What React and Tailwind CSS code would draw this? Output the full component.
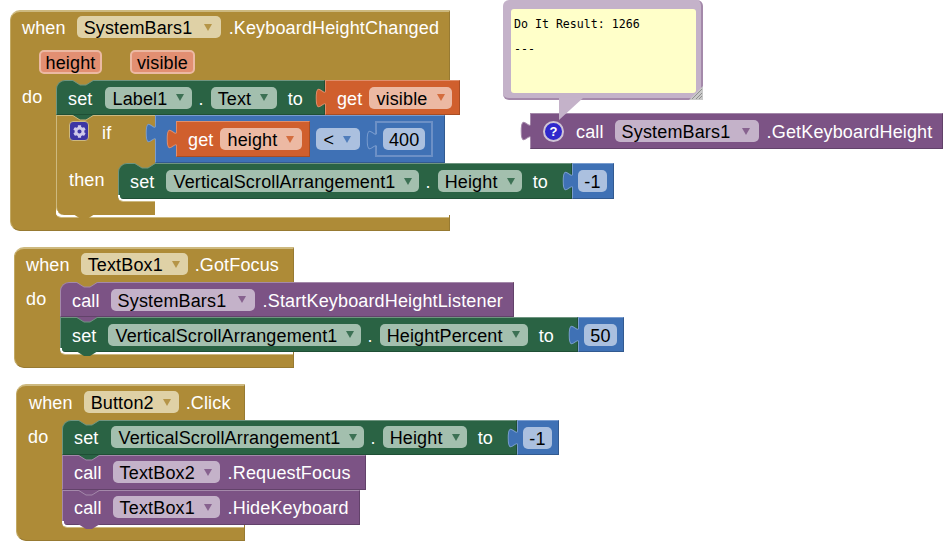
import React from 'react';
import { FaCog } from 'react-icons/fa';

// App Inventor block colours
const brown = { hex: '#ae8b37', light: '#cdb97f', dark: '#8f7130', bg: 'bg-[#ae8b37]', edges: 'border-t-[#cdb97f] border-l-[#cdb97f] border-b-[#977a32] border-r-[#977a32]', field: 'bg-[#dfd1a6]', arrow: '#ae8b37' };
const green = { hex: '#2a6344', light: '#6f9580', dark: '#1f4f35', bg: 'bg-[#2a6344]', edges: 'border-t-[#6f9580] border-l-[#6f9580] border-b-[#1f4f35] border-r-[#1f4f35]', field: 'bg-[#a3bfae]', arrow: '#2a6344' };
const purple = { hex: '#7c5385', light: '#a489aa', dark: '#62426a', bg: 'bg-[#7c5385]', edges: 'border-t-[#a489aa] border-l-[#a489aa] border-b-[#62426a] border-r-[#62426a]', field: 'bg-[#c4b2c9]', arrow: '#7c5385' };
const orange = { hex: '#d05f2d', light: '#e08f6c', dark: '#a84d24', bg: 'bg-[#d05f2d]', edges: 'border-t-[#e08f6c] border-l-[#e08f6c] border-b-[#a84d24] border-r-[#a84d24]', field: 'bg-[#ecb9a3]', arrow: '#d05f2d' };
const blue = { hex: '#3f71b5', light: '#7a9dcf', dark: '#325a90', bg: 'bg-[#3f71b5]', edges: 'border-t-[#7a9dcf] border-l-[#7a9dcf] border-b-[#325a90] border-r-[#325a90]', field: 'bg-[#abc0df]', arrow: '#3f71b5' };

const Word = ({ children, className = '' }) => (
  <span className={`text-white whitespace-nowrap pt-[2px] ${className}`}>{children}</span>
);

const Field = ({ tone, children, arrow = true, width }) => (
  <span className={`${tone.field} ${width} h-[22px] rounded-[5px] pt-[2px] flex items-center text-black whitespace-nowrap shrink-0 ${arrow ? 'pl-[7px] pr-[9px] justify-between' : 'justify-center'}`}>
    {children}
    {arrow && (
      <svg width="8" height="7" viewBox="0 0 8 7" className="ml-[9px] shrink-0 -mt-[2px]">
        <polygon points="0,0 8,0 4,7" fill={tone.arrow} opacity="0.85" />
      </svg>
    )}
  </span>
);

// notch between stacked statement blocks
const Tab = ({ fill, edge, className }) => (
  <svg width="23" height="7" viewBox="0 0 23 7" className={`absolute z-10 left-[16px] ${className}`}>
    <polygon points="0,0 8,5 14,5 22,0" fill={fill} />
    {edge && <polyline points="0,0 8,5 14,5 22,0" fill="none" stroke={edge} strokeWidth="1" />}
  </svg>
);

// output plug on the left of a value block (blockly puzzle tab)
const Plug = ({ fill, edge }) => (
  <svg width="11" height="20" viewBox="-0.5 0 9 15" preserveAspectRatio="none" className="absolute z-10 -left-[11px] top-[7px]">
    <path d="M8.5 0 c0 10 -8 -8 -8 7.5 s8 -2.5 8 7.5 Z" fill={fill} />
    <path d="M8.5 0 c0 10 -8 -8 -8 7.5 s8 -2.5 8 7.5" fill="none" stroke={edge} strokeWidth="0.8" />
  </svg>
);

// statement block: top notch comes from the block above, optional value on the right
const Statement = ({ tone, above, tail, value, className = '', inner = '', children }) => (
  <div className={`relative flex items-stretch h-[35px] ${above === brown ? brown.bg : ''} ${className}`}>
    {above && <Tab fill={above.hex} edge={tone.light} className="top-0" />}
    <div className={`${tone.bg} ${tone.edges} border flex items-center pl-[11px] pr-[10px] gap-[8px] ${above === brown ? 'rounded-tl-[9px]' : ''} ${inner}`}>
      {children}
    </div>
    {value}
    {tail && <Tab fill={tone.hex} className="top-[34px]" />}
  </div>
);

const GetBlock = ({ name, width, className = 'h-[35px]' }) => (
  <div className={`relative ${orange.bg} ${orange.edges} border flex items-center pl-[11px] pr-[7px] gap-[7px] ${className}`}>
    <Plug fill={orange.hex} edge={orange.light} />
    <Word>get</Word>
    <Field tone={orange} width={width}>{name}</Field>
  </div>
);

const NumberBlock = ({ value, width }) => (
  <div className={`relative ${blue.bg} ${blue.edges} border flex items-center pl-[5px] pr-[6px] h-full`}>
    <Plug fill={blue.hex} edge={blue.light} />
    <Field tone={blue} arrow={false} width={width}>{value}</Field>
  </div>
);

const SetProperty = ({ target, targetWidth = 'w-[253px]', prop, propWidth, setClass = 'mr-[4px]', toClass = 'mr-[13px]' }) => (
  <>
    <Word className={setClass}>set</Word>
    <Field tone={green} width={targetWidth}>{target}</Field>
    <Word className="-ml-[2px] -mr-[1px]">.</Word>
    <Field tone={green} width={propWidth}>{prop}</Field>
    <Word className={`ml-[3px] ${toClass}`}>to</Word>
  </>
);

// white curve where the inner statements meet the lower arm of the block
const InnerCorner = ({ className }) => (
  <div className={`absolute right-0 -top-[4px] h-[6px] border-b-2 border-l-2 border-white rounded-bl-[5px] shadow-[0_1px_0_#cdb97f] ${className}`} />
);

const Footer = ({ width }) => (
  <div className={`relative ${brown.bg} ${width} h-[16px] rounded-bl-[10px] border-b border-b-[#977a32] border-r border-r-[#977a32] border-l border-l-[#c2a964]`}>
    <InnerCorner className="left-[45px]" />
  </div>
);

const Spine = () => <div className={`${brown.bg} w-[46px] border-l border-l-[#c2a964] flex`} />;

const Bubble = () => (
  <div className="absolute left-[503px] top-0 w-[200px] h-[100px] bg-[#c4b2c9] rounded-[6px] pl-[8px] pt-[9px] pr-[5px] pb-[5px] border-b-2 border-b-[#a489aa] border-r-2 border-r-[#a489aa]">
    <div className="relative h-full bg-[#ffffc9] rounded-[3px] pl-[3px] pt-[3px] font-['DejaVu_Sans_Mono'] tracking-normal text-[11.6px] leading-[24px] text-black">
      <div>Do It Result: 1266</div>
      <div className="mt-[1px]">---</div>
    </div>
    <svg width="14" height="14" viewBox="0 0 14 14" className="absolute -right-[2px] -bottom-[2px]">
      <polygon points="14,0 14,14 0,14" fill="#c9c9c9" />
      <path d="M3 13 L13 3 M7 13 L13 7 M10 13 L13 10" stroke="#8f8f8f" strokeWidth="1" />
    </svg>
    <svg width="26" height="22" viewBox="0 0 26 22" className="absolute left-[55px] top-full z-20">
      <polygon points="1,0 25,0 1,22" fill="#c4b2c9" />
    </svg>
  </div>
);

export default function App() {
  return (
    <div className="relative w-[952px] h-[550px] bg-white overflow-hidden font-['Liberation_Sans'] text-[18px] leading-none tracking-[0.15px]">
      {/* KeyboardHeightChanged */}
      <div className="absolute left-[10px] top-[10px] flex flex-col items-start">
        <div className={`${brown.bg} w-[440px] h-[70px] rounded-tl-[10px] border-t-2 border-t-[#cdb97f] border-l border-l-[#c2a964] border-r border-r-[#977a32] pt-[4px]`}>
          <div className="flex items-center h-[22px] pl-[11px]">
            <Word className="mr-[11px]">when</Word>
            <Field tone={brown} width="w-[144px]">SystemBars1</Field>
            <Word className="ml-[8px]">.KeyboardHeightChanged</Word>
          </div>
          <div className="flex items-center gap-[28px] pl-[28px] mt-[12px]">
            <span className="w-[63px] h-[24px] pt-[2px] rounded-[5px] bg-[#e28f72] border-2 border-[#ecb9a3] flex items-center justify-center text-black">height</span>
            <span className="w-[65px] h-[24px] pt-[2px] rounded-[5px] bg-[#e28f72] border-2 border-[#ecb9a3] flex items-center justify-center text-black">visible</span>
          </div>
        </div>
        <div className="flex items-stretch">
          <Spine />
          <div className="flex flex-col items-start relative">
            <Word className="absolute -left-[34px] top-[6px]">do</Word>
            <Statement tone={green} above={brown} value={<GetBlock name="visible" width="w-[83px]" />}>
              <SetProperty target="Label1" targetWidth="w-[87px]" prop="Text" propWidth="w-[66px]" setClass="mr-[5px]" toClass="mr-[11px]" />
            </Statement>
            {/* if / then */}
            <div className="relative flex flex-col items-start">
              <Tab fill={green.hex} edge={brown.light} className="top-0" />
              <div className="flex items-stretch h-[48px]">
                <div className={`relative ${brown.bg} w-[99px] border-l border-t border-l-[#cdb97f] border-t-[#cdb97f] flex items-start pl-[12px] pt-[5px] gap-[13px]`}>
                  <span className="w-[20px] h-[20px] rounded-[4px] bg-[#3d35a5] border border-[#cdb97f] flex items-center justify-center">
                    <FaCog size={13} color="#cfc9ea" />
                  </span>
                  <Word className="mt-[1px]">if</Word>
                </div>
                <div className={`relative ${blue.bg} ${blue.edges} border flex items-center pl-[20px] pr-[11px] w-[290px]`}>
                  <Plug fill={blue.hex} edge={blue.light} />
                  <GetBlock name="height" width="w-[82px]" className="h-[36px]" />
                  <div className="w-[6px]" />
                  <Field tone={blue} width="w-[44px]">&lt;</Field>
                  <div className="w-[15px]" />
                  <div className={`relative ${blue.bg} border-2 border-[#6c90c6] w-[58px] h-[36px] flex items-center justify-center`}>
                    <Plug fill={blue.hex} edge={blue.light} />
                    <Field tone={blue} arrow={false} width="w-[42px]">400</Field>
                  </div>
                </div>
              </div>
              <div className="flex items-stretch h-[36px]">
                <div className={`${brown.bg} w-[62px] border-l border-l-[#cdb97f] flex items-start pl-[12px] pt-[6px]`}>
                  <Word>then</Word>
                </div>
                <Statement tone={green} above={brown} className="h-[36px]" value={<NumberBlock value="-1" width="w-[29px]" />}>
                  <SetProperty target="VerticalScrollArrangement1" prop="Height" propWidth="w-[84px]" />
                </Statement>
              </div>
              <div className={`relative ${brown.bg} w-[99px] h-[16px] rounded-bl-[8px] border-l border-l-[#cdb97f]`}>
                <InnerCorner className="left-[61px]" />
                <Tab fill={brown.hex} className="top-[15px]" />
              </div>
            </div>
          </div>
        </div>
        <Footer width="w-[440px]" />
      </div>

      {/* GotFocus */}
      <div className="absolute left-[14px] top-[247px] flex flex-col items-start">
        <div className={`${brown.bg} w-[280px] h-[35px] rounded-tl-[10px] border-t-2 border-t-[#cdb97f] border-l border-l-[#c2a964] border-r border-r-[#977a32] flex items-start pt-[4px] pl-[11px]`}>
          <Word className="mr-[11px] mt-[1px]">when</Word>
          <Field tone={brown} width="w-[107px]">TextBox1</Field>
          <Word className="ml-[7px] mt-[1px]">.GotFocus</Word>
        </div>
        <div className="flex items-stretch">
          <Spine />
          <div className="relative flex flex-col items-start">
            <Word className="absolute -left-[34px] top-[6px]">do</Word>
            <Statement tone={purple} above={brown}>
              <Word className="mr-[3px]">call</Word>
              <Field tone={purple} width="w-[144px]">SystemBars1</Field>
              <Word>.StartKeyboardHeightListener</Word>
            </Statement>
            <Statement tone={green} above={purple} tail value={<NumberBlock value="50" width="w-[33px]" />}>
              <SetProperty target="VerticalScrollArrangement1" prop="HeightPercent" propWidth="w-[148px]" />
            </Statement>
          </div>
        </div>
        <Footer width="w-[280px]" />
      </div>

      {/* Click */}
      <div className="absolute left-[16px] top-[384px] flex flex-col items-start">
        <div className={`${brown.bg} w-[229px] h-[36px] rounded-tl-[10px] border-t-2 border-t-[#cdb97f] border-l border-l-[#c2a964] border-r border-r-[#977a32] flex items-start pt-[5px] pl-[12px]`}>
          <Word className="mr-[11px] mt-[1px]">when</Word>
          <Field tone={brown} width="w-[95px]">Button2</Field>
          <Word className="ml-[7px] mt-[1px]">.Click</Word>
        </div>
        <div className="flex items-stretch">
          <Spine />
          <div className="relative flex flex-col items-start">
            <Word className="absolute -left-[34px] top-[6px]">do</Word>
            <Statement tone={green} above={brown} inner="pb-[1px]" value={<NumberBlock value="-1" width="w-[29px]" />}>
              <SetProperty target="VerticalScrollArrangement1" prop="Height" propWidth="w-[84px]" setClass="mr-[5px]" />
            </Statement>
            <Statement tone={purple} above={green} inner="pb-[1px]">
              <Word className="mr-[3px]">call</Word>
              <Field tone={purple} width="w-[107px]">TextBox2</Field>
              <Word className="mr-[4px]">.RequestFocus</Word>
            </Statement>
            <Statement tone={purple} above={purple} tail inner="pb-[1px]">
              <Word className="mr-[3px]">call</Word>
              <Field tone={purple} width="w-[107px]">TextBox1</Field>
              <Word>.HideKeyboard</Word>
            </Statement>
          </div>
        </div>
        <Footer width="w-[229px]" />
      </div>

      {/* Do It result on the floating call block */}
      <Bubble />
      <div className="absolute left-[530px] top-[113px] flex items-stretch h-[36px]">
        <div className={`relative ${purple.bg} ${purple.edges} border flex items-center pl-[12px] pr-[10px] gap-[8px]`}>
          <Plug fill={purple.hex} edge={purple.light} />
          <span className="w-[21px] h-[21px] rounded-full bg-[#2f28cc] border-2 border-[#cfc4d6] flex items-center justify-center text-white font-bold text-[13px] mr-[4px] z-30">?</span>
          <Word className="mr-[3px]">call</Word>
          <Field tone={purple} width="w-[144px]">SystemBars1</Field>
          <Word>.GetKeyboardHeight</Word>
        </div>
      </div>
    </div>
  );
}
